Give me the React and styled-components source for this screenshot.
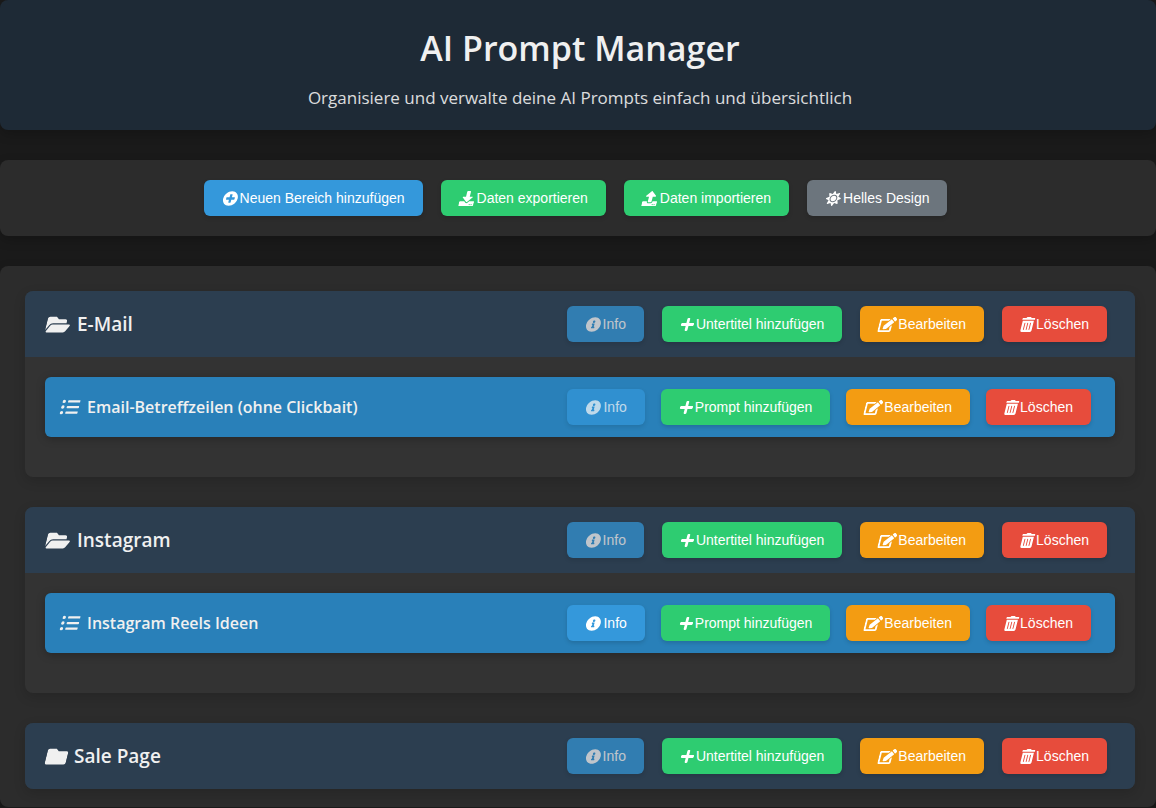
import React from 'react'
import styled, { createGlobalStyle } from 'styled-components'
import {
  FaPlusCircle,
  FaDownload,
  FaUpload,
  FaSun,
  FaInfoCircle,
  FaPlus,
  FaEdit,
  FaTrashAlt,
  FaFolder,
  FaFolderOpen,
  FaListUl,
} from 'react-icons/fa'

const GlobalStyle = createGlobalStyle`
  * {
    box-sizing: border-box;
  }
  body {
    margin: 0;
    background-color: #1a1a1a;
    color: #f0f0f0;
    font-family: 'Segoe UI', 'Open Sans', sans-serif;
  }
`

const colors = {
  blue: '#3498db',
  green: '#2ecc71',
  orange: '#f39c12',
  red: '#e74c3c',
  grey: '#6c757d',
}

// these icons are not square, so they need their own width
const PlusIcon = styled(FaPlus)`
  width: 13px;
`
const EditIcon = styled(FaEdit)`
  width: 17px;
`
const TrashIcon = styled(FaTrashAlt)`
  width: 13px;
`
const FolderOpenIcon = styled(FaFolderOpen)`
  width: 24px;
`

const PageHeader = styled.header`
  padding: 23px 20px 19px 24px;
  text-align: center;
  background-color: #1e2a36;
  border-radius: 8px;
  box-shadow: 0 4px 12px rgba(0, 0, 0, 0.2);
`
const PageTitle = styled.h1`
  margin: 0 0 12px;
  font-size: 34px;
  font-weight: 600;
  line-height: 50px;
`
const Tagline = styled.p`
  margin: 0;
  font-size: 17px;
  line-height: 26px;
  opacity: 0.9;
`

const Toolbar = styled.nav`
  display: flex;
  flex-wrap: wrap;
  justify-content: center;
  gap: 18px;
  margin: 30px 0;
  padding: 20px 25px 20px 20px;
  background-color: #2c2c2c;
  border-radius: 8px;
  box-shadow: 0 4px 12px rgba(0, 0, 0, 0.2);
`

const Button = styled.button`
  display: inline-flex;
  align-items: center;
  gap: 3px;
  height: 36px;
  padding: 0 18px;
  border: none;
  border-radius: 6px;
  background-color: ${props => colors[props.$color]};
  color: #fff;
  font-family: 'Liberation Sans', Arial, sans-serif;
  font-size: 14px;
  line-height: 16px;
  white-space: nowrap;
  cursor: pointer;
  box-shadow: 0 2px 4px rgba(0, 0, 0, 0.15);

  &:disabled {
    opacity: 0.7;
    cursor: default;
  }
  svg {
    font-size: 15px;
    transform: skewX(-14deg);
    transform-origin: 50% 75%;
  }
`

const Panel = styled.main`
  padding: 25px 21px 18px 25px;
  background-color: #2c2c2c;
  border-radius: 8px;
  box-shadow: 0 4px 12px rgba(0, 0, 0, 0.2);
`
const Section = styled.section`
  margin-bottom: 30px;
  background-color: #333;
  border-radius: 8px;
  box-shadow: 0 4px 12px rgba(0, 0, 0, 0.15);

  &:last-child {
    margin-bottom: 0;
  }
`
const SectionHeader = styled.div`
  display: flex;
  align-items: center;
  justify-content: space-between;
  padding: 15px 28px 15px 20px;
  background-color: #2c3e50;
  border-radius: ${props => (props.$open ? '8px 8px 0 0' : '8px')};
`
const SectionTitle = styled.h2`
  display: flex;
  align-items: center;
  gap: 8px;
  margin: 0;
  font-size: 19px;
  font-weight: 600;
  line-height: 28px;

  svg {
    font-size: 21px;
    transform: skewX(-14deg);
    transform-origin: 50% 75%;
  }
`
const SectionBody = styled.div`
  padding: 20px 20px 40px;
`
const SubRow = styled.div`
  display: flex;
  align-items: center;
  justify-content: space-between;
  padding: 12px 24px 12px 15px;
  background-color: #2980b9;
  border-radius: 6px;
  box-shadow: 0 2px 8px rgba(0, 0, 0, 0.25);
`
const SubTitle = styled(SectionTitle).attrs({ as: 'h3' })`
  gap: 9px;
  font-size: 16px;
  line-height: 24px;

  svg {
    font-size: 18px;
  }
`
const Actions = styled.div`
  display: flex;
  gap: ${props => (props.$compact ? '16px' : '18px')};
`

const sections = [
  {
    title: 'E-Mail',
    items: [{ title: 'Email-Betreffzeilen (ohne Clickbait)', hasInfo: false }],
  },
  {
    title: 'Instagram',
    items: [{ title: 'Instagram Reels Ideen', hasInfo: true }],
  },
  { title: 'Sale Page', items: [] },
]

const RowActions = ({ addLabel, hasInfo, compact }) => (
  <Actions $compact={compact}>
    <Button $color="blue" disabled={!hasInfo}>
      <FaInfoCircle />
      Info
    </Button>
    <Button $color="green">
      <PlusIcon />
      {addLabel}
    </Button>
    <Button $color="orange">
      <EditIcon />
      Bearbeiten
    </Button>
    <Button $color="red">
      <TrashIcon />
      Löschen
    </Button>
  </Actions>
)

const App = () => (
  <>
    <GlobalStyle />
    <PageHeader>
      <PageTitle>AI Prompt Manager</PageTitle>
      <Tagline>
        Organisiere und verwalte deine AI Prompts einfach und übersichtlich
      </Tagline>
    </PageHeader>
    <Toolbar>
      <Button $color="blue">
        <FaPlusCircle />
        Neuen Bereich hinzufügen
      </Button>
      <Button $color="green">
        <FaDownload />
        Daten exportieren
      </Button>
      <Button $color="green">
        <FaUpload />
        Daten importieren
      </Button>
      <Button $color="grey">
        <FaSun />
        Helles Design
      </Button>
    </Toolbar>
    <Panel>
      {sections.map(section => {
        const open = section.items.length > 0
        return (
          <Section key={section.title}>
            <SectionHeader $open={open}>
              <SectionTitle>
                {open ? <FolderOpenIcon /> : <FaFolder />}
                {section.title}
              </SectionTitle>
              <RowActions addLabel="Untertitel hinzufügen" />
            </SectionHeader>
            {open && (
              <SectionBody>
                {section.items.map(item => (
                  <SubRow key={item.title}>
                    <SubTitle>
                      <FaListUl />
                      {item.title}
                    </SubTitle>
                    <RowActions
                      addLabel="Prompt hinzufügen"
                      hasInfo={item.hasInfo}
                      compact
                    />
                  </SubRow>
                ))}
              </SectionBody>
            )}
          </Section>
        )
      })}
    </Panel>
  </>
)

export default App
